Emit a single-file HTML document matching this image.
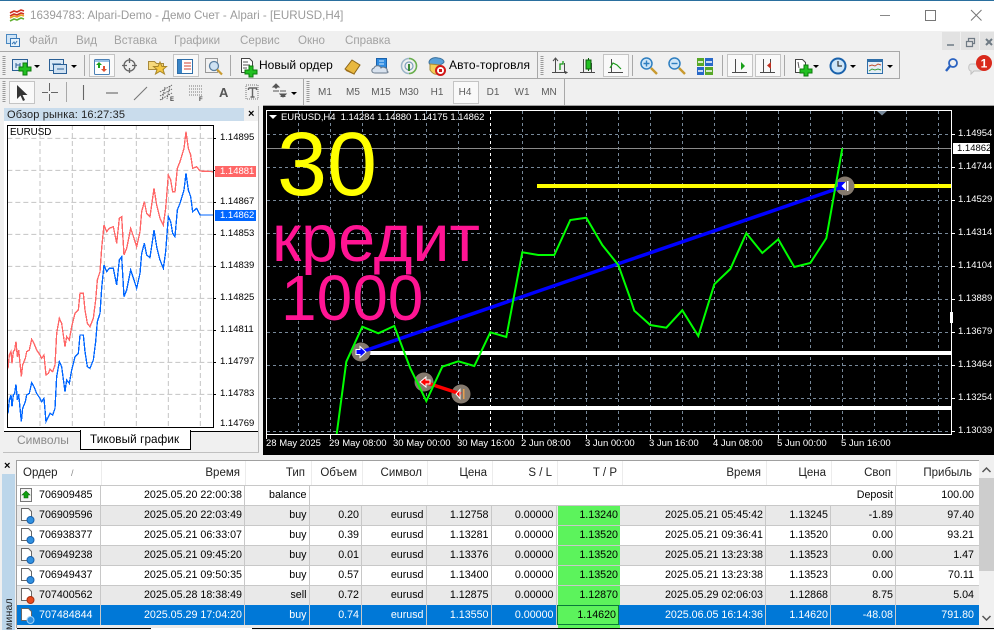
<!DOCTYPE html>
<html><head><meta charset="utf-8">
<style>
html,body{margin:0;padding:0;background:#f0f0f0}
body{width:994px;height:630px;position:relative;overflow:hidden;font-family:"Liberation Sans",sans-serif;font-size:10.7px;color:#000}
i{font-style:normal}
.a{position:absolute;white-space:nowrap}
.m{color:#a2a2a2;font-size:11.6px;top:34px}
.tf{color:#5c5c5c;font-size:10px;top:87px;width:28px;text-align:center}
.btn{position:absolute;background:#f9f9f9;border:1px solid #c4c4c4;box-sizing:border-box}
.pl{position:absolute;left:958px;color:#fff;font-size:9.5px;line-height:10px}
.tl{position:absolute;top:439px;color:#fff;font-size:9.5px;line-height:10px;white-space:nowrap}
.ml{position:absolute;left:220px;color:#000;font-size:9.5px;line-height:10px}
.r{position:absolute;left:17px;width:962px;height:19px;line-height:19px}
.r span,.h span{position:absolute;white-space:nowrap}
.h{position:absolute;left:17px;top:461px;width:962px;height:24px;line-height:24px;background:#fff;color:#222;font-size:11.5px}
.g{background:#e9e9e9}.w{background:#fff}.s{background:#0078d7;color:#fff}
.tp{position:absolute;top:0;left:541px;width:60px;padding-right:2px;height:19px;background:#5cf35c;color:#000;text-align:right;line-height:19px}
.v{position:absolute;top:0;bottom:0;width:1px;background:#c8c8c8}
</style></head><body>

<!-- title bar -->
<div class="a" style="left:0;top:0;width:994px;height:31px;background:#fff;border-top:1px solid #2a6f9e;box-sizing:border-box"></div>
<div class="a" style="left:30px;top:9px;font-size:11.6px;color:#9b9b9b">16394783: Alpari-Demo - Демо Счет - Alpari - [EURUSD,H4]</div>

<svg class="a" style="left:0;top:0" width="994" height="106" viewBox="0 0 994 106" fill="none">
 <!-- app logo -->
 <path d="M10 13l4-2 3 1 4-2 3 1M10 16l4-2 3 1 4-2 3 1" stroke="#d03020" stroke-width="1.6"/>
 <path d="M10 18l4-2 3 1 4-2 3 1" stroke="#e8a020" stroke-width="1.6"/>
 <path d="M10 21l4-2 3 1 4-2 3 1" stroke="#60b030" stroke-width="1.6"/>
 <!-- window controls -->
 <path d="M880 15.500h10" stroke="#888"/>
 <rect x="925.500" y="10.500" width="10" height="10" stroke="#777"/>
 <path d="M971 10l10.500 10.500M981.500 10L971 20.500" stroke="#777"/>
 <!-- mdi -->
 <rect x="942" y="32" width="18" height="18" fill="#e2e2e2"/><rect x="961" y="32" width="18" height="18" fill="#e2e2e2"/><rect x="980" y="32" width="14" height="18" fill="#e2e2e2"/>
 <path d="M947 45h7" stroke="#8a949c" stroke-width="2"/>
 <path d="M966.500 41.500h6v5h-6zM968.500 41v-2.500h6v5h-2" stroke="#6f7a84" stroke-width="1.200"/>
 <path d="M986 39l6 6M992 39l-6 6" stroke="#6f7a84" stroke-width="2"/>
 <!-- menu icon -->
 <rect x="6.500" y="34.500" width="10" height="9" fill="#cfe4f6" stroke="#4a88c0"/><rect x="10.500" y="38.500" width="9" height="8" fill="#e6f2fb" stroke="#3a78b5"/>
 <path d="M12 44l2-2 1 2 2-3" stroke="#3a78b5"/>
 <!-- grips -->
 <path d="M4 56v20M4 81v21" stroke="#999" stroke-dasharray="1 1" stroke-width="3"/>
 <path d="M542 56v20M308 81v21" stroke="#999" stroke-dasharray="1 1" stroke-width="3"/>
 <!-- separators -->
 <path d="M84.500 55v21M230.500 55v21M632.500 55v21M722.500 55v21M784.500 55v21M66.500 82v20" stroke="#a8a8a8"/>
</svg>

<!-- toolbars borders -->
<div class="a" style="left:0;top:51px;width:900px;height:1px;background:#a8a8a8"></div>
<div class="a" style="left:0;top:78px;width:900px;height:1px;background:#a8a8a8"></div>
<div class="a" style="left:899px;top:52px;width:1px;height:26px;background:#a8a8a8"></div>
<div class="a" style="left:537px;top:52px;width:1px;height:26px;background:#a8a8a8"></div>
<div class="a" style="left:303px;top:79px;width:1px;height:26px;background:#a8a8a8"></div>
<div class="a" style="left:564px;top:79px;width:1px;height:26px;background:#a8a8a8"></div>

<!-- pressed buttons -->
<div class="btn" style="left:89px;top:54px;width:26px;height:23px"></div>
<div class="btn" style="left:173px;top:54px;width:26px;height:23px"></div>
<div class="btn" style="left:603px;top:54px;width:26px;height:23px"></div>
<div class="btn" style="left:727px;top:54px;width:26px;height:23px"></div>
<div class="btn" style="left:755px;top:54px;width:26px;height:23px"></div>
<div class="btn" style="left:9px;top:81px;width:26px;height:23px"></div>
<div class="btn" style="left:453px;top:81px;width:26px;height:23px"></div>

<svg class="a" style="left:0;top:0" width="994" height="106" viewBox="0 0 994 106" fill="none">
 <!-- new chart -->
 <rect x="12.500" y="59.500" width="15" height="11" fill="#dbe9f6" stroke="#2a5f95"/>
 <path d="M16 63v5M16 65h4M20 63v5" stroke="#2a5f95"/>
 <path d="M19 67h4v-4h4v4h4v4h-4v4h-4v-4h-4z" fill="#22c022" stroke="#0b7a0b"/>
 <path d="M34 65h6l-3 3z" fill="#000"/>
 <!-- profiles -->
 <rect x="49.500" y="59.500" width="14" height="11" fill="#dbe9f6" stroke="#2a5f95"/>
 <rect x="53.500" y="64.500" width="13" height="9" fill="#cfe1f2" stroke="#2a5f95"/>
 <path d="M52 64h9M57 69h7" stroke="#2a5f95"/>
 <path d="M71 65h6l-3 3z" fill="#000"/>
 <!-- market watch -->
 <rect x="94.500" y="59.500" width="15" height="15" rx="1" fill="#fff" stroke="#4a80b5"/>
 <path d="M95 60h14v2H95z" fill="#9cc3e8"/>
 <path d="M99 62l3 3h-2v3h-2v-3h-2z" fill="#1aa01a"/>
 <path d="M104 72l-3-3h2v-3h2v3h2z" fill="#e05030"/>
 <!-- crosshair -->
 <circle cx="129.500" cy="65.500" r="5.500" stroke="#666" stroke-width="1.300"/>
 <path d="M129.500 58v5M129.500 68v5M122 65.500h5M132 65.500h5" stroke="#666" stroke-width="1.300"/>
 <!-- folder star -->
 <path d="M148.500 61.500h6l2 2h7v6h-15z" fill="#f6d97c" stroke="#a88a3c"/>
 <path d="M160 62l2 4.500h4.500l-3.500 3 1.500 4.500-4.500-2.800-4.500 2.800 1.500-4.500-3.500-3h4.500z" fill="#f5c842" stroke="#a8862a"/>
 <!-- navigator list -->
 <rect x="177.500" y="59.500" width="15" height="14" fill="#fff" stroke="#2f6ea8"/>
 <rect x="178" y="60" width="4" height="13" fill="#3a86c8"/>
 <path d="M184 63h7M184 66h7M184 69h7" stroke="#d04030"/>
 <!-- tester -->
 <rect x="205.500" y="58.500" width="12" height="14" fill="#f2f2f2" stroke="#999"/>
 <circle cx="214" cy="66" r="4.500" fill="#cfe2f3" stroke="#5a7fa0" stroke-width="1.300"/>
 <path d="M217 69.500l5 5" stroke="#c89a30" stroke-width="2.200"/>
 <!-- new order -->
 <path d="M241.500 58.500h8l3 3v11h-11z" fill="#fff" stroke="#444"/>
 <path d="M243 62h5M243 65h7M243 68h4" stroke="#555"/>
 <path d="M245 70h4v-4h4v4h4v4h-4v3h-4v-3h-4z" fill="#22c022" stroke="#0b7a0b"/>
 <!-- gold book -->
 <path d="M345 69l7-9 8 5-6 9z" fill="#e8b840" stroke="#8a6418"/>
 <path d="M345 69l9 5 1 1-9-4z" fill="#a06f18"/>
 <!-- person cloud -->
 <rect x="376.500" y="58.500" width="10" height="9" fill="#2f8be0" stroke="#1a62ac"/>
 <path d="M379 61h5M379 64h5" stroke="#cfe8ff"/>
 <path d="M375 73c-4 0-4-4-1-5 1-3 6-3 7 0 2-2 7 0 6 3 2 1 1 2-1 2z" fill="#d8e2ee" stroke="#6a7a8c"/>
 <!-- signal -->
 <circle cx="409" cy="66" r="7.500" stroke="#9cb6c8" stroke-width="1.500"/>
 <path d="M409 58.500a7.500 7.500 0 0 1 0 15" stroke="#6ab04a" stroke-width="1.500"/>
 <circle cx="409" cy="66" r="4" stroke="#7da0bc" stroke-width="1.200"/>
 <rect x="408" y="64" width="2" height="7" fill="#3a8a3a"/>
 <!-- auto trading -->
 <path d="M429 62c1-4 6-5 9-4 3 0 6 2 6 4 0 1-2 2-4 3h-8c-2 0-3-1-3-3z" fill="#5aa0d8" stroke="#3a709c"/>
 <path d="M430 64l10 1-2 9c-3 1-6-1-8-4z" fill="#f3cf58" stroke="#a88a3c"/>
 <circle cx="440.500" cy="70.500" r="4.500" fill="#fff" stroke="#d01818" stroke-width="2"/>
 <rect x="439" y="69" width="3" height="3" fill="#d01818"/>
 <!-- bars -->
 <path d="M555.500 59v14M552 72.500h15M564.500 63v9" stroke="#4a4a4a"/>
 <path d="M560 70v-6h3v-3" stroke="#1a9a1a" stroke-width="1.300"/>
 <path d="M553 61l2.500-3 2.500 3M565 71.500l2 1-2 1" stroke="#4a4a4a"/>
 <!-- candle -->
 <path d="M583.500 59v14M580 72.500h15M591.500 63v9" stroke="#4a4a4a"/>
 <rect x="586" y="60" width="5" height="9" fill="#22c022" stroke="#0b5a0b"/>
 <path d="M588.500 58v2M588.500 69v2" stroke="#0b5a0b"/>
 <!-- line -->
 <path d="M611.500 59v14M608 72.500h15" stroke="#4a4a4a"/>
 <path d="M610 68l3-5 4 2 4 4" stroke="#1a9a1a" stroke-width="1.200"/>
 <!-- zoom + -->
 <circle cx="646.500" cy="63.500" r="5.500" fill="#cfe6f8" stroke="#2f7fc0" stroke-width="1.500"/>
 <path d="M643.500 63.500h6M646.500 60.500v6" stroke="#2f7fc0" stroke-width="1.400"/>
 <path d="M651 68l6 6" stroke="#c89a30" stroke-width="2.400"/>
 <!-- zoom - -->
 <circle cx="674.500" cy="63.500" r="5.500" fill="#cfe6f8" stroke="#2f7fc0" stroke-width="1.500"/>
 <path d="M671.500 63.500h6" stroke="#2f7fc0" stroke-width="1.400"/>
 <path d="M679 68l6 6" stroke="#c89a30" stroke-width="2.400"/>
 <!-- tiles -->
 <rect x="697" y="58" width="7" height="8" fill="#58a828"/><rect x="705" y="58" width="8" height="8" fill="#2868c8"/>
 <rect x="697" y="67" width="7" height="8" fill="#2868c8"/><rect x="705" y="67" width="8" height="8" fill="#58a828"/>
 <path d="M698 62h5M706 62h6M698 71h5M706 71h6" stroke="#fff" stroke-width="1.500"/>
 <!-- shift / autoscroll -->
 <path d="M735.500 59v14M732 72.500h15" stroke="#4a4a4a"/>
 <path d="M741 62l4 4-4 4z" fill="#1aa01a"/>
 <path d="M763.500 59v14M760 72.500h15M770.500 59v13" stroke="#4a4a4a"/>
 <path d="M771 62l-4 3.500 4 3.500z" fill="#c03020"/>
 <!-- indicators -->
 <path d="M795.500 59.500h7l3 3v10h-10z" fill="#fff" stroke="#444"/>
 <path d="M799 68l-1-6" stroke="#555"/>
 <path d="M800 69h4v-4h4v4h4v4h-4v3h-4v-3h-4z" fill="#22c022" stroke="#0b7a0b"/>
 <path d="M813 65h6l-3 3z" fill="#000"/>
 <!-- clock -->
 <circle cx="838" cy="66" r="7.500" fill="#cfe6f8" stroke="#1a62ac" stroke-width="2"/>
 <path d="M838 61v5h4" stroke="#333" stroke-width="1.200"/>
 <path d="M850 65h6l-3 3z" fill="#000"/>
 <!-- template -->
 <rect x="867.500" y="59.500" width="15" height="14" fill="#e4eef6" stroke="#2f6ea8"/>
 <path d="M868 60h14v2h-14z" fill="#2f6ea8"/>
 <path d="M869 66l3-1 3 1 3-2 3 1" stroke="#c05030"/>
 <path d="M869 71l3-2 3 1 3-1 3 1" stroke="#3a9a3a"/>
 <path d="M887 65h6l-3 3z" fill="#000"/>
 <!-- search -->
 <circle cx="953" cy="63" r="4" stroke="#2a62c0" stroke-width="1.800"/>
 <path d="M950 66l-4 5" stroke="#2a62c0" stroke-width="2.400"/>
 <!-- chat -->
 <path d="M971 64h9c3 0 3 7 0 7h-6l-3 3v-3c-3 0-3-7 0-7z" fill="#e6e6e6" stroke="#c0c0c0"/>
 <circle cx="984" cy="63" r="8" fill="#d92a1c"/>
 <text x="984" y="67.500" fill="#fff" font-size="12" font-weight="bold" text-anchor="middle" font-family="Liberation Sans">1</text>
 <!-- toolbar 2 -->
 <path d="M17 85v14l3.500-3.500 2.500 5.500 2-1-2.500-5h5z" fill="#333"/>
 <path d="M49.500 83v8M49.500 94v7M42 92.500h6M51 92.500h7" stroke="#666"/>
 <path d="M83.500 85v15" stroke="#666" stroke-width="1.100"/>
 <path d="M106 93h12" stroke="#666" stroke-width="1.100"/>
 <path d="M134 100l13-13" stroke="#777" stroke-width="1.100"/>
 <path d="M160 92l12-7M160 96l12-7M160 100l12-7M165 87l-3 13M170 86l-3 13" stroke="#666" stroke-dasharray="1.500 1"/>
 <path d="M189 86h13M189 89h13M189 92h13M189 95h13" stroke="#777" stroke-dasharray="1 1"/>
 <path d="M246 85h12v14h-12z" stroke="#777" stroke-dasharray="1 1"/>
 <path d="M248.500 88h8v2M252.500 88v9M250.500 97h4M248.500 88v2" stroke="#666" stroke-width="1.400"/>
 <path d="M273 87l3-3 3 3zM280 94l3 3 3-3zM273 91h6M280 91h6" fill="#555" stroke="#555"/>
 <path d="M273 86l3 3 3-3zM280 97l3-3 3 3z" fill="#555"/>
 <path d="M291 92h6l-3 3z" fill="#000"/>
</svg>

<!-- menu text -->
<div class="a m" style="left:29px">Файл</div>
<div class="a m" style="left:76px">Вид</div>
<div class="a m" style="left:114px">Вставка</div>
<div class="a m" style="left:174px">Графики</div>
<div class="a m" style="left:240px">Сервис</div>
<div class="a m" style="left:298px">Окно</div>
<div class="a m" style="left:345px">Справка</div>

<div class="a" style="left:259px;top:58px;font-size:12px">Новый ордер</div>
<div class="a" style="left:449px;top:58px;font-size:12px;letter-spacing:.15px">Авто-торговля</div>

<div class="a" style="left:219px;top:85px;font-size:13px;font-weight:bold;color:#555;line-height:15px">A</div>
<div class="a" style="top:97px;font-size:6px;font-weight:bold;color:#444;left:170px">E</div>
<div class="a" style="left:199px;top:97px;font-size:6px;font-weight:bold;color:#444">F</div>

<div class="a tf" style="left:311px">M1</div>
<div class="a tf" style="left:339px">M5</div>
<div class="a tf" style="left:367px">M15</div>
<div class="a tf" style="left:395px">M30</div>
<div class="a tf" style="left:423px">H1</div>
<div class="a tf" style="left:451px">H4</div>
<div class="a tf" style="left:479px">D1</div>
<div class="a tf" style="left:508px">W1</div>
<div class="a tf" style="left:535px">MN</div>

<!-- market watch panel -->
<div class="a" style="left:4px;top:108px;width:240px;height:13px;background:#c9dcec"></div>
<div class="a" style="left:7px;top:109px;font-size:11px;line-height:13px;color:#222;letter-spacing:.15px">Обзор рынка: 16:27:35</div>
<div class="a" style="left:248px;top:107px;font-size:11px;font-weight:bold;line-height:15px">×</div>
<div class="a" style="left:4px;top:121px;width:254px;height:310px;background:#fff"></div>
<svg class="a" style="left:0;top:105px" width="265" height="330" viewBox="0 0 795 990" fill="none">
 <defs><clipPath id="cp"><rect x="22" y="60" width="618" height="906"/></clipPath></defs>
 <g stroke="#c4c4c4" stroke-width="3" stroke-dasharray="15 9">
  <path d="M120 60v906M217 60v906M313 60v906M409 60v906M505 60v906M601 60v906"/>
  <path d="M22 100h618M22 196h618M22 292h618M22 388h618M22 484h618M22 580h618M22 676h618M22 772h618M22 868h618"/>
 </g>
 <g clip-path="url(#cp)" stroke-width="4" stroke-linejoin="miter" shape-rendering="crispEdges">
  <polyline stroke="#ff6666" points="24,790 28,750 33,740 36,775 40,740 44,735 48,710 52,755 56,735 64,815 68,780 76,760 80,740 88,735 95,703 102,715 110,735 120,750 125,760 132,750 138,810 145,805 150,793 158,800 165,780 170,685 178,640 185,655 195,725 200,695 208,705 215,665 225,625 235,615 240,565 250,565 255,615 262,655 270,665 280,640 287,585 292,525 300,500 305,430 312,360 320,380 328,370 340,365 350,415 358,340 365,335 372,450 380,430 392,370 402,400 410,425 420,380 425,320 433,290 440,325 450,335 462,250 470,300 480,340 490,360 497,310 505,210 512,225 518,260 525,260 532,190 540,170 552,130 558,80 565,130 572,150 578,190 590,185 600,198 640,200"/>
  <polyline stroke="#0066ff" points="24,925 28,885 33,870 36,905 40,870 44,865 48,838 52,885 56,868 64,950 68,910 76,890 80,870 88,865 95,833 102,845 110,865 120,880 125,890 132,880 138,950 145,935 150,925 158,930 165,910 170,815 178,770 185,785 195,860 200,825 208,835 215,795 225,755 235,745 240,690 250,690 255,740 262,785 270,790 280,765 287,710 292,650 300,625 305,550 312,480 320,500 328,490 340,490 350,540 358,465 365,455 372,575 380,555 392,495 402,525 410,550 420,505 425,445 433,415 440,450 450,458 462,375 470,425 480,465 490,490 497,440 505,335 512,350 518,385 525,395 532,315 540,295 552,255 558,205 565,255 572,275 578,320 590,310 600,330 640,330"/>
 </g>
</svg>
<!-- mini frame -->
<div class="a" style="left:7px;top:125px;border:1px solid #000;height:301px;width:205px"></div>
<div class="a" style="left:10px;top:126px;font-size:9.8px;line-height:13px">EURUSD</div>
<svg class="a" style="left:213px;top:125px" width="5" height="305"><path d="M0 13.500h3M0 45.500h3M0 77.500h3M0 109.500h3M0 141.500h3M0 173.500h3M0 205.500h3M0 237.500h3M0 269.500h3" stroke="#000"/></svg>
<div class="ml" style="top:133px">1.14895</div>
<div class="a" style="left:215px;top:166px;width:41px;height:11px;background:#ff6666;color:#fff;font-size:9.5px;line-height:11px;text-indent:5px">1.14881</div>
<div class="ml" style="top:197px">1.14867</div>
<div class="a" style="left:215px;top:210px;width:41px;height:11px;background:#0066ff;color:#fff;font-size:9.5px;line-height:11px;text-indent:5px">1.14862</div>
<div class="ml" style="top:229px">1.14853</div>
<div class="ml" style="top:261px">1.14839</div>
<div class="ml" style="top:293px">1.14825</div>
<div class="ml" style="top:325px">1.14811</div>
<div class="ml" style="top:357px">1.14797</div>
<div class="ml" style="top:389px">1.14783</div>
<div class="ml" style="top:419px">1.14769</div>

<!-- tabs -->
<div class="a" style="left:4px;top:431px;width:254px;height:21px;background:#f0f0f0;border-top:1px solid #000;box-sizing:border-box"></div>
<div class="a" style="left:80px;top:430px;width:111px;height:20px;background:#fff;border:1px solid #000;border-top:none;box-sizing:border-box"></div>
<div class="a" style="left:17px;top:433px;font-size:12px;color:#8a8a8a;line-height:14px">Символы</div>
<div class="a" style="left:90px;top:433px;font-size:11.700px;line-height:14px;letter-spacing:.1px">Тиковый график</div>
<div class="a" style="left:258px;top:106px;width:1px;height:347px;background:#b8b8b8"></div>
<div class="a" style="left:3px;top:452px;width:256px;height:1px;background:#c0c0c0"></div>

<!-- main chart -->
<div class="a" style="left:263px;top:105px;width:731px;height:1px;background:#a0a0a0"></div>
<div class="a" style="left:263px;top:106px;width:731px;height:349px;background:#000"></div>
<svg class="a" style="left:263px;top:106px" width="731" height="349" viewBox="263 106 731 349" fill="none">
 <g stroke="#778899" stroke-dasharray="3 3">
  <path d="M298.500 111v323M330.500 111v323M362.500 111v323M394.500 111v323M426.500 111v323M458.500 111v323M522.500 111v323M554.500 111v323M586.500 111v323M618.500 111v323M650.500 111v323M682.500 111v323M714.500 111v323M746.500 111v323M778.500 111v323M810.500 111v323M842.500 111v323M874.500 111v323M906.500 111v323M938.500 111v323"/>
  <path d="M267 134.500h684M267 167.500h684M267 200.500h684M267 233.500h684M267 266.500h684M267 299.500h684M267 332.500h684M267 365.500h684M267 398.500h684M267 431.500h684"/>
 </g>
 <path d="M490.500 111v323" stroke="#fff" stroke-dasharray="3 3"/>
 <path d="M267 148.500h684" stroke="#8a8a8a"/>
 <rect x="266.500" y="110.500" width="685" height="324" stroke="#fff"/>
 <path d="M266.500 435v4M330.500 435v4M394.500 435v4M458.500 435v4M522.500 435v4M586.500 435v4M650.500 435v4M714.500 435v4M778.500 435v4M842.500 435v4" stroke="#fff"/>
 <path d="M951 134.500h4M951 167.500h4M951 200.500h4M951 233.500h4M951 266.500h4M951 299.500h4M951 332.500h4M951 365.500h4M951 398.500h4M951 431.500h4" stroke="#fff"/>
 <path d="M877 111h10l-5 4.500z" fill="#778899"/>
 <rect x="950" y="312" width="3" height="11" fill="#fff"/>
 <!-- S/R lines -->
 <rect x="361" y="351" width="590" height="4" fill="#fff"/>
 <rect x="458" y="406" width="493" height="4" fill="#fff"/>
 <rect x="537" y="184" width="414" height="4" fill="#ffff00"/>
 <!-- circles -->
 <circle cx="361" cy="352" r="9.500" fill="#857a6e"/>
 <circle cx="424" cy="382" r="9.500" fill="#857a6e"/>
 <circle cx="461" cy="394" r="9.500" fill="#857a6e"/>
 <circle cx="845" cy="186" r="9.500" fill="#857a6e"/>
 <!-- trade lines -->
 <path d="M361 352L845 186" stroke="#0000ff" stroke-width="3.500"/>
 <path d="M424 382L461 394" stroke="#ff0000" stroke-width="3.500"/>
 <!-- price line -->
 <polyline stroke="#00ff00" stroke-width="2" points="336.700,434 346.300,361.700 362.300,326.700 378.300,333.300 394.300,326 410.300,368.300 426.300,401 442.300,366.700 458.300,361.300 474.300,366 490.300,332.300 506.300,337 522.300,252.300 538.300,255 554.300,255 570.300,220 586.300,217.700 602.300,245 618.300,265 630,297.700 634.300,310.700 650.300,325 666.300,327.700 682.300,310.300 698.300,336 714.300,284.300 730.300,269 746.300,233.300 762.300,253 778.300,239.300 794.300,267 810.300,263 826.300,238.300 842.300,148.300"/>
 <!-- markers -->
 <path d="M356 349.500h4v-3l6 5.500-6 5.500v-3h-4z" fill="#0000ff" stroke="#fff"/>
 <path d="M430 380h-4v-3l-6 5 6 5v-3h4z" fill="#ff0000" stroke="#fff"/>
 <path d="M460 389.500v9l-4-4.500z" fill="#ff0000" stroke="#fff"/>
 <rect x="463" y="389" width="1.500" height="10" fill="#e8a050"/>
 <rect x="838" y="182" width="8" height="8" fill="#0000ff"/>
 <path d="M846 181.500v9l-4.500-4.500z" fill="#fff"/>
 <rect x="847" y="181" width="1.500" height="10" fill="#fff"/>
</svg>

<!-- chart texts -->
<svg class="a" style="left:267px;top:112px" width="12" height="10"><path d="M2 3h8l-4 4z" fill="#fff"/></svg>
<div class="a" style="left:281px;top:112px;color:#fff;font-size:9.5px;line-height:11px;letter-spacing:-.05px">EURUSD,H4 &nbsp;1.14284 1.14880 1.14175 1.14862</div>
<div class="a" style="left:277px;top:115px;font-size:90px;line-height:100px;color:#ffff00">30</div>
<div class="a" style="left:272px;top:204px;font-size:66.500px;line-height:70px;color:#ff1493">кредит</div>
<div class="a" style="left:281px;top:260px;font-size:64px;line-height:76px;color:#ff1493">1000</div>

<div class="pl" style="top:129px">1.14954</div>
<div class="a" style="left:953px;top:143px;width:37px;height:11px;background:#fff;color:#000;font-size:9.5px;line-height:11px;text-indent:4px">1.14862</div>
<div class="pl" style="top:162px">1.14744</div>
<div class="pl" style="top:195px">1.14529</div>
<div class="pl" style="top:228px">1.14314</div>
<div class="pl" style="top:261px">1.14104</div>
<div class="pl" style="top:294px">1.13889</div>
<div class="pl" style="top:327px">1.13679</div>
<div class="pl" style="top:360px">1.13464</div>
<div class="pl" style="top:393px">1.13254</div>
<div class="pl" style="top:426px">1.13039</div>

<div class="tl" style="left:266px">28 May 2025</div>
<div class="tl" style="left:329px">29 May 08:00</div>
<div class="tl" style="left:393px">30 May 00:00</div>
<div class="tl" style="left:457px">30 May 16:00</div>
<div class="tl" style="left:521px">2 Jun 08:00</div>
<div class="tl" style="left:585px">3 Jun 00:00</div>
<div class="tl" style="left:649px">3 Jun 16:00</div>
<div class="tl" style="left:713px">4 Jun 08:00</div>
<div class="tl" style="left:777px">5 Jun 00:00</div>
<div class="tl" style="left:841px">5 Jun 16:00</div>

<!-- terminal -->
<div class="a" style="left:0;top:455px;width:994px;height:5px;background:#f0f0f0"></div>
<div class="a" style="left:16px;top:460px;width:963px;height:1px;background:#a0a0a0"></div>
<div class="a" style="left:16px;top:460px;width:1px;height:168px;background:#a0a0a0"></div>
<div class="a" style="left:4px;top:460px;font-size:11px;font-weight:bold;line-height:13px">×</div>
<div class="a" style="left:2px;top:474px;width:13px;height:156px;background:#bcd6ea"></div>
<div class="a" style="left:3px;top:600px;font-size:10.500px;line-height:12px;color:#222;transform-origin:0 0;transform:rotate(-90deg) translate(-30px,0);letter-spacing:.2px">минал</div>

<div class="h">
 <span style="left:6px">Ордер</span><span style="left:54px;color:#888;font-size:9px">/</span>
 <span style="right:739px">Время</span><span style="right:674px">Тип</span><span style="right:622px">Объем</span><span style="right:557px">Символ</span><span style="right:492px">Цена</span><span style="right:427px">S / L</span><span style="right:362px">T / P</span><span style="right:218px">Время</span><span style="right:153px">Цена</span><span style="right:88px">Своп</span><span style="right:7px">Прибыль</span>
 <i class="v" style="left:84px;background:#ececec"></i><i class="v" style="left:228px;background:#ececec"></i><i class="v" style="left:294px;background:#ececec"></i><i class="v" style="left:345px;background:#ececec"></i><i class="v" style="left:410px;background:#ececec"></i><i class="v" style="left:475px;background:#ececec"></i><i class="v" style="left:540px;background:#ececec"></i><i class="v" style="left:605px;background:#ececec"></i><i class="v" style="left:749px;background:#ececec"></i><i class="v" style="left:814px;background:#ececec"></i><i class="v" style="left:879px;background:#ececec"></i>
</div>
<div class="a" style="left:17px;top:485px;width:962px;height:120px;background:#c8c8c8"></div>

<!-- rows: right offsets relative to row box (979 right edge) -->
<div class="r w" style="top:486px">
 <span style="left:22px">706909485</span><span style="right:737px">2025.05.20 22:00:38</span><span style="right:672.500px">balance</span><span style="right:86px">Deposit</span><span style="right:5px">100.00</span>
 <i class="v" style="left:83px"></i><i class="v" style="left:227px"></i><i class="v" style="left:292px"></i><i class="v" style="left:878px"></i>
</div>
<div class="r g" style="top:506px"><i class="tp">1.13240</i>
 <span style="left:22px">706909596</span><span style="right:737px">2025.05.20 22:03:49</span><span style="right:672.500px">buy</span><span style="right:620px">0.20</span><span style="right:555.500px">eurusd</span><span style="right:490.500px">1.12758</span><span style="right:425.500px">0.00000</span><span style="right:216px">2025.05.21 05:45:42</span><span style="right:151px">1.13245</span><span style="right:86px">-1.89</span><span style="right:5px">97.40</span>
 <i class="v" style="left:83px"></i><i class="v" style="left:227px"></i><i class="v" style="left:292px"></i><i class="v" style="left:344px"></i><i class="v" style="left:409px"></i><i class="v" style="left:474px"></i><i class="v" style="left:539px"></i><i class="v" style="left:748px"></i><i class="v" style="left:813px"></i><i class="v" style="left:878px"></i>
</div>
<div class="r w" style="top:526px"><i class="tp">1.13520</i>
 <span style="left:22px">706938377</span><span style="right:737px">2025.05.21 06:33:07</span><span style="right:672.500px">buy</span><span style="right:620px">0.39</span><span style="right:555.500px">eurusd</span><span style="right:490.500px">1.13281</span><span style="right:425.500px">0.00000</span><span style="right:216px">2025.05.21 09:36:41</span><span style="right:151px">1.13520</span><span style="right:86px">0.00</span><span style="right:5px">93.21</span>
 <i class="v" style="left:83px"></i><i class="v" style="left:227px"></i><i class="v" style="left:292px"></i><i class="v" style="left:344px"></i><i class="v" style="left:409px"></i><i class="v" style="left:474px"></i><i class="v" style="left:539px"></i><i class="v" style="left:748px"></i><i class="v" style="left:813px"></i><i class="v" style="left:878px"></i>
</div>
<div class="r g" style="top:546px"><i class="tp">1.13520</i>
 <span style="left:22px">706949238</span><span style="right:737px">2025.05.21 09:45:20</span><span style="right:672.500px">buy</span><span style="right:620px">0.01</span><span style="right:555.500px">eurusd</span><span style="right:490.500px">1.13376</span><span style="right:425.500px">0.00000</span><span style="right:216px">2025.05.21 13:23:38</span><span style="right:151px">1.13523</span><span style="right:86px">0.00</span><span style="right:5px">1.47</span>
 <i class="v" style="left:83px"></i><i class="v" style="left:227px"></i><i class="v" style="left:292px"></i><i class="v" style="left:344px"></i><i class="v" style="left:409px"></i><i class="v" style="left:474px"></i><i class="v" style="left:539px"></i><i class="v" style="left:748px"></i><i class="v" style="left:813px"></i><i class="v" style="left:878px"></i>
</div>
<div class="r w" style="top:566px"><i class="tp">1.13520</i>
 <span style="left:22px">706949437</span><span style="right:737px">2025.05.21 09:50:35</span><span style="right:672.500px">buy</span><span style="right:620px">0.57</span><span style="right:555.500px">eurusd</span><span style="right:490.500px">1.13400</span><span style="right:425.500px">0.00000</span><span style="right:216px">2025.05.21 13:23:38</span><span style="right:151px">1.13523</span><span style="right:86px">0.00</span><span style="right:5px">70.11</span>
 <i class="v" style="left:83px"></i><i class="v" style="left:227px"></i><i class="v" style="left:292px"></i><i class="v" style="left:344px"></i><i class="v" style="left:409px"></i><i class="v" style="left:474px"></i><i class="v" style="left:539px"></i><i class="v" style="left:748px"></i><i class="v" style="left:813px"></i><i class="v" style="left:878px"></i>
</div>
<div class="r g" style="top:586px"><i class="tp">1.12870</i>
 <span style="left:22px">707400562</span><span style="right:737px">2025.05.28 18:38:49</span><span style="right:672.500px">sell</span><span style="right:620px">0.72</span><span style="right:555.500px">eurusd</span><span style="right:490.500px">1.12875</span><span style="right:425.500px">0.00000</span><span style="right:216px">2025.05.29 02:06:03</span><span style="right:151px">1.12868</span><span style="right:86px">8.75</span><span style="right:5px">5.04</span>
 <i class="v" style="left:83px"></i><i class="v" style="left:227px"></i><i class="v" style="left:292px"></i><i class="v" style="left:344px"></i><i class="v" style="left:409px"></i><i class="v" style="left:474px"></i><i class="v" style="left:539px"></i><i class="v" style="left:748px"></i><i class="v" style="left:813px"></i><i class="v" style="left:878px"></i>
</div>
<div class="r s" style="top:605px;height:20px;line-height:20px"><i class="tp" style="height:18px;width:58px;border:1px solid #0a7a3a;line-height:19px;left:540px;top:0">1.14620</i>
 <span style="left:22px">707484844</span><span style="right:737px">2025.05.29 17:04:20</span><span style="right:672.500px">buy</span><span style="right:620px">0.74</span><span style="right:555.500px">eurusd</span><span style="right:490.500px">1.13550</span><span style="right:425.500px">0.00000</span><span style="right:216px">2025.06.05 16:14:36</span><span style="right:151px">1.14620</span><span style="right:86px">-48.08</span><span style="right:5px">791.80</span>
 <i class="v" style="left:83px"></i><i class="v" style="left:227px"></i><i class="v" style="left:292px"></i><i class="v" style="left:344px"></i><i class="v" style="left:409px"></i><i class="v" style="left:474px"></i><i class="v" style="left:539px"></i><i class="v" style="left:748px"></i><i class="v" style="left:813px"></i><i class="v" style="left:878px"></i>
</div>
<div class="a" style="left:17px;top:625px;width:962px;height:3px;background:#e9e9e9"></div>
<div class="a" style="left:558px;top:625px;width:62px;height:3px;background:#5cf35c"></div>
<div class="a" style="left:17px;top:628px;width:134px;height:1px;background:#000"></div>
<div class="a" style="left:252px;top:628px;width:742px;height:1px;background:#000"></div>
<div class="a" style="left:151px;top:628px;width:101px;height:2px;background:#fff"></div>

<!-- row icons -->
<svg class="a" style="left:17px;top:486px" width="22" height="140" fill="none">
 <rect x="3.500" y="2.500" width="11" height="13" fill="#f4f4f4" stroke="#777"/>
 <path d="M9 5l4 4h-2v3H7V9H5z" fill="#10a010" stroke="#0a6a0a" stroke-width=".6"/>
 <g><path d="M4.500 22.500h7l3 3v9h-10z" fill="#fff" stroke="#666"/><circle cx="13.500" cy="34" r="3.500" fill="#2f90e0" stroke="#1a62ac"/></g>
 <g transform="translate(0 20)"><path d="M4.500 22.500h7l3 3v9h-10z" fill="#fff" stroke="#666"/><circle cx="13.500" cy="34" r="3.500" fill="#2f90e0" stroke="#1a62ac"/></g>
 <g transform="translate(0 40)"><path d="M4.500 22.500h7l3 3v9h-10z" fill="#fff" stroke="#666"/><circle cx="13.500" cy="34" r="3.500" fill="#2f90e0" stroke="#1a62ac"/></g>
 <g transform="translate(0 60)"><path d="M4.500 22.500h7l3 3v9h-10z" fill="#fff" stroke="#666"/><circle cx="13.500" cy="34" r="3.500" fill="#2f90e0" stroke="#1a62ac"/></g>
 <g transform="translate(0 80)"><path d="M4.500 22.500h7l3 3v9h-10z" fill="#fff" stroke="#666"/><circle cx="13.500" cy="34" r="3.500" fill="#e84a1c" stroke="#a83010"/></g>
 <g transform="translate(0 100)"><path d="M4.500 22.500h7l3 3v9h-10z" fill="#fff" stroke="#666"/><circle cx="13.500" cy="34" r="3.500" fill="#2f90e0" stroke="#9fd0f5"/></g>
</svg>

<!-- scrollbar -->
<div class="a" style="left:979px;top:461px;width:15px;height:167px;background:#f0f0f0"></div>
<div class="a" style="left:979px;top:478px;width:15px;height:93px;background:#cdcdcd"></div>
<svg class="a" style="left:979px;top:461px" width="15" height="167" fill="none"><path d="M3.500 11l4-4 4 4M3.500 155l4 4 4-4" stroke="#555" stroke-width="1.500"/></svg>
</body></html>
